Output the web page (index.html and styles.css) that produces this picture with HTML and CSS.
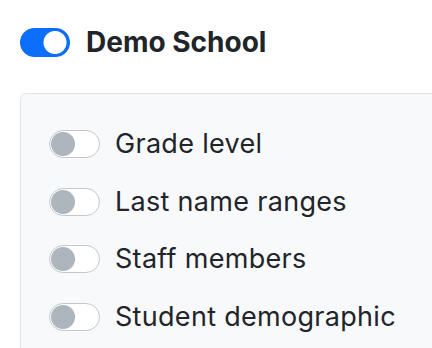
FILE: index.html
```html
<!DOCTYPE html>
<html lang="en">
<head>
  <meta charset="UTF-8" />
  <meta name="viewport" content="width=device-width, initial-scale=1.0"/>
  <title>Demo School</title>
  <link rel="stylesheet" href="styles.css">
</head>
<body>

<div class="school">
  <label class="school-head">
    <input type="checkbox" class="switch switch-main" checked>
    <span class="school-name">Demo School</span>
  </label>

  <div class="options">
    <label class="option">
      <input type="checkbox" class="switch">
      <span>Grade level</span>
    </label>
    <label class="option">
      <input type="checkbox" class="switch">
      <span>Last name ranges</span>
    </label>
    <label class="option">
      <input type="checkbox" class="switch">
      <span>Staff members</span>
    </label>
    <label class="option">
      <input type="checkbox" class="switch">
      <span>Student demographic</span>
    </label>
  </div>
</div>

</body>
</html>
```

FILE: styles.css
```css
body {
  font-family: Inter, 'Liberation Sans', Arial, sans-serif;
  color: #212529;
  background-color: #fff;
  margin: 0;
  overflow: hidden;
}
.school {
  padding: 28px 0 0 20px;
}
.school-head {
  display: flex;
  align-items: center;
  gap: 16px;
}
.school-name {
  font-size: 28px;
  line-height: 29px;
  font-weight: bold;
}
.switch {
  appearance: none;
  -webkit-appearance: none;
  margin: 0;
  flex: none;
  width: 51px;
  height: 28px;
  border: 1px solid #c4c8cd;
  border-radius: 14px;
  background-color: #fff;
  background-image: radial-gradient(circle at 13px 50%, #adb5bd 11.5px, transparent 12.5px);
}
.switch-main {
  width: 50px;
  height: 29px;
  border-color: #0d6efd;
  background-color: #0d6efd;
  background-image: radial-gradient(circle at 34px 50%, #fff 11px, transparent 12px);
}
.options {
  margin-top: 36px;
  width: 460px;
  padding: 36px 0 40px 28px;
  background-color: #f8f9fa;
  border: 1px solid #e2e5e8;
  border-radius: 6px;
  display: flex;
  flex-direction: column;
  gap: 29.7px;
}
.option {
  display: flex;
  align-items: center;
  gap: 15px;
  font-size: 27px;
  line-height: 28px;
  letter-spacing: 0.3px;
}
```
